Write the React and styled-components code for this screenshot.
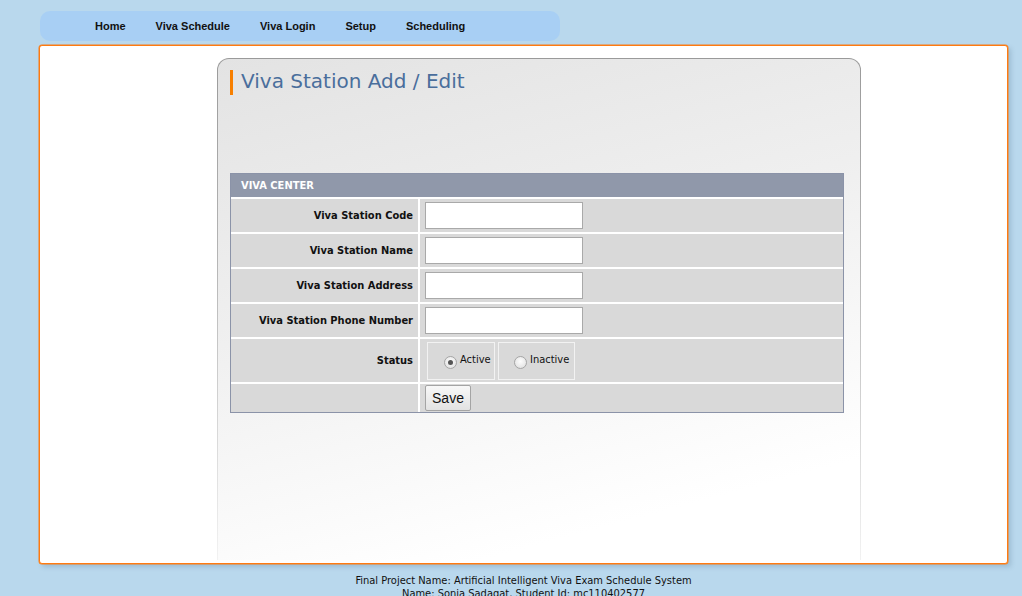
import React from 'react'
import styled, { createGlobalStyle } from 'styled-components'

const GlobalStyle = createGlobalStyle`
  html, body {
    margin: 0;
    padding: 0;
    background: #b9d8ed;
    overflow: hidden;
  }
`

const Page = styled.div`
  height: 596px;
  padding-top: 11px;
  box-sizing: border-box;
`

const Nav = styled.ul`
  list-style: none;
  margin: 0 0 0 40px;
  padding: 0 0 0 40px;
  width: 480px;
  height: 30px;
  background: #a8cff4;
  border-radius: 10px;
  display: flex;
  align-items: center;
`

const NavLink = styled.li`
  padding: 0 15px;
  font-family: "Liberation Sans", Arial, sans-serif;
  font-size: 11px;
  font-weight: bold;
  color: #111;
`

const Main = styled.div`
  margin: 4px 14px 0 39px;
  height: 519px;
  box-sizing: border-box;
  background: #fff;
  border: 1px solid #ff7a10;
  border-radius: 3px;
  box-shadow: 0 0 0 0.5px #f5801f, 3px 3px 5px rgba(60, 90, 120, 0.22);
  padding: 12px 0 0 177px;
`

const Frame = styled.div`
  width: 644px;
  height: 502px;
  box-sizing: border-box;
  padding: 1px 1px 0;
  border-radius: 12px 12px 0 0;
  background: linear-gradient(#9a9a9a 0%, #b5b5b5 40%, #f2f2f2 100%);
`

const Panel = styled.div`
  height: 100%;
  border-radius: 11px 11px 0 0;
  background: linear-gradient(165deg, #e3e3e3 0%, #efefef 40%, #ffffff 85%);
  padding: 11px 0 0 12px;
  box-sizing: border-box;
`

const Title = styled.h1`
  margin: 0;
  height: 25px;
  border-left: 3px solid #f77f00;
  padding-left: 8px;
  font-family: "DejaVu Sans", Verdana, sans-serif;
  font-weight: normal;
  font-size: 20px;
  line-height: 22px;
  color: #4a6e9c;
`

const Grid = styled.div`
  margin-top: 78px;
  width: 614px;
  box-sizing: border-box;
  border: 1px solid #8b93a8;
  background: #fff;
  display: grid;
  grid-template-columns: 187px 1fr;
  column-gap: 2px;
  row-gap: 2px;
  font-family: "DejaVu Sans Condensed", "DejaVu Sans", sans-serif;
  font-stretch: condensed;
  font-size: 11px;
`

const Header = styled.div`
  grid-column: 1 / -1;
  height: 23px;
  background: #9098aa;
  color: #fff;
  font-weight: bold;
  padding-left: 10px;
  display: flex;
  align-items: center;
`

const Label = styled.div`
  height: ${p => p.$h}px;
  background: #d9d9d9;
  font-weight: bold;
  color: #111;
  display: flex;
  align-items: center;
  justify-content: flex-end;
  padding-right: 5px;
`

const Value = styled.div`
  height: ${p => p.$h}px;
  background: #d9d9d9;
  display: flex;
  align-items: center;
  padding-left: 5px;
`

const Input = styled.input`
  width: 158px;
  height: 27px;
  box-sizing: border-box;
  border: 1px solid #a9a9a9;
  background: #fff;
  margin: 0;
`

const Options = styled.div`
  display: flex;
  gap: 3px;
  padding-left: 2px;
`

const Option = styled.label`
  width: ${p => p.$w}px;
  height: 38px;
  box-sizing: border-box;
  border: 1px solid #f2f2f2;
  display: flex;
  align-items: center;
  padding: 0 0 2px ${p => p.$pad}px;
  gap: 3px;
  color: #111;
`

const Radio = styled.span`
  width: 11px;
  height: 11px;
  margin-top: 5px;
  border-radius: 50%;
  border: 1px solid #a5a5a5;
  background: radial-gradient(circle at 50% 40%, #fdfdfd, #dcdcdc);
  display: flex;
  align-items: center;
  justify-content: center;
  &::after {
    content: '';
    width: 5px;
    height: 5px;
    border-radius: 50%;
    background: ${p => (p.$on ? '#555' : 'transparent')};
  }
`

const SaveButton = styled.button`
  width: 46px;
  height: 26px;
  margin: 0;
  padding: 0;
  border: 1px solid #a4a4a4;
  border-radius: 2px;
  background: linear-gradient(#f8f8f8, #e2e2e2);
  font-family: "Liberation Sans", Arial, sans-serif;
  font-size: 14px;
  color: #111;
`

const Footer = styled.div`
  margin: 10px 14px 0 39px;
  text-align: center;
  font-family: "DejaVu Sans Condensed", "DejaVu Sans", sans-serif;
  font-stretch: condensed;
  font-size: 11px;
  line-height: 13px;
  color: #111;
`

const fields = [
  'Viva Station Code',
  'Viva Station Name',
  'Viva Station Address',
  'Viva Station Phone Number',
]

const App = () => {
  return (
    <Page>
      <GlobalStyle />
      <Nav>
        {['Home', 'Viva Schedule', 'Viva Login', 'Setup', 'Scheduling'].map(l => (
          <NavLink key={l}>{l}</NavLink>
        ))}
      </Nav>
      <Main>
        <Frame>
          <Panel>
            <Title>Viva Station Add / Edit</Title>
            <Grid>
              <Header>VIVA CENTER</Header>
              {fields.map(f => (
                <React.Fragment key={f}>
                  <Label $h={33}>{f}</Label>
                  <Value $h={33}><Input type="text" /></Value>
                </React.Fragment>
              ))}
              <Label $h={43}>Status</Label>
              <Value $h={43}>
                <Options>
                  <Option $w={68} $pad={16}><Radio $on />Active</Option>
                  <Option $w={77} $pad={15}><Radio />Inactive</Option>
                </Options>
              </Value>
              <Label $h={28}></Label>
              <Value $h={28}><SaveButton>Save</SaveButton></Value>
            </Grid>
          </Panel>
        </Frame>
      </Main>
      <Footer>
        Final Project Name: Artificial Intelligent Viva Exam Schedule System
        <br />
        Name: Sonia Sadaqat, Student Id: mc110402577
      </Footer>
    </Page>
  )
}

export default App
